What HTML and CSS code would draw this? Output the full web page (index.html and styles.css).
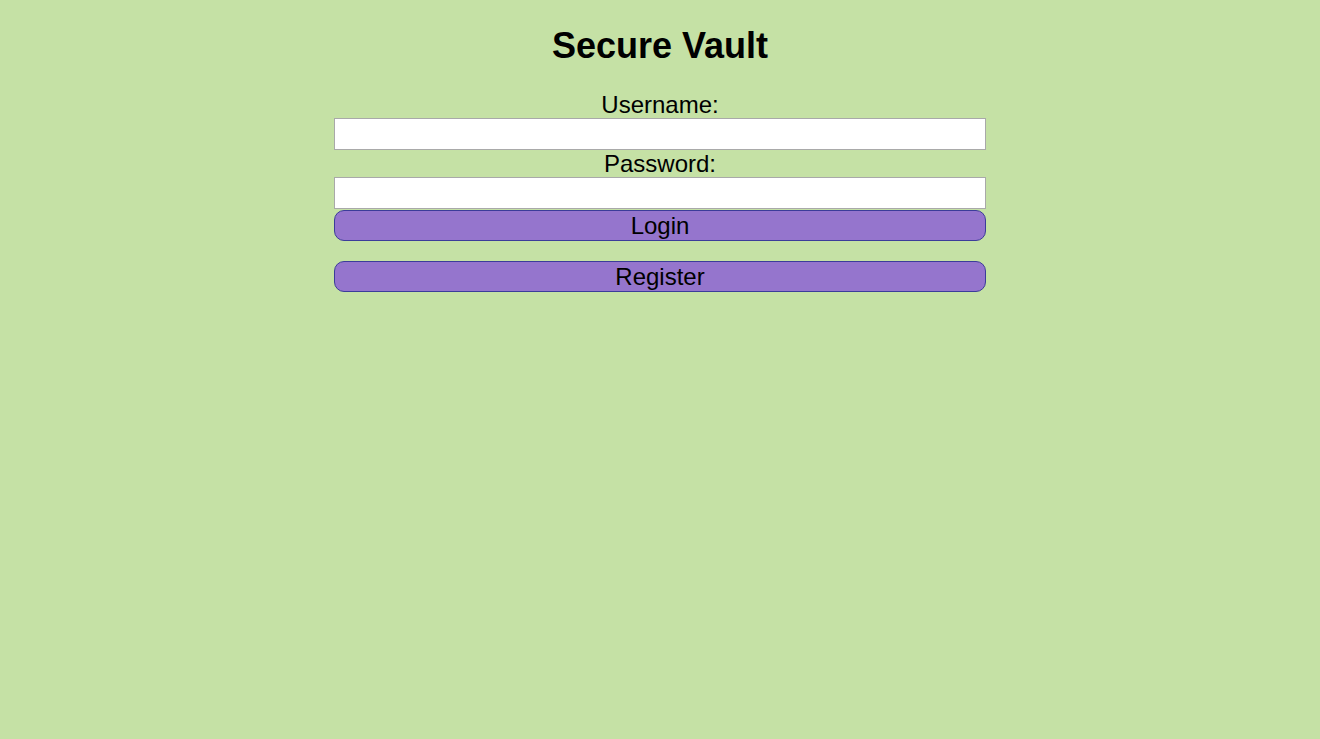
FILE: index.html
```html
<!DOCTYPE html>
<html lang="en">
<head>
<meta charset="utf-8">
<title>Secure Vault</title>
<link rel="stylesheet" href="styles.css">
</head>
<body>
<main class="page">
  <h1 class="title">Secure Vault</h1>
  <form class="form">
    <label class="label" for="username">Username:</label>
    <input class="field" id="username" type="text">
    <label class="label" for="password">Password:</label>
    <input class="field field-last" id="password" type="password">
    <button class="btn btn-login" type="button">Login</button>
    <button class="btn" type="button">Register</button>
  </form>
</main>
</body>
</html>
```

FILE: styles.css
```css
html, body {
  margin: 0;
  padding: 0;
  background: #c5e1a5;
  font-family: "Liberation Sans", Arial, sans-serif;
  color: #000;
}
.page {
  display: flex;
  flex-direction: column;
  align-items: center;
}
.title {
  font-size: 36px;
  font-weight: bold;
  margin: 25px 0;
  line-height: 41px;
}
.form {
  width: 652px;
  display: flex;
  flex-direction: column;
  align-items: stretch;
}
.label {
  font-size: 24px;
  text-align: center;
  line-height: 27px;
}
.field {
  box-sizing: border-box;
  height: 32px;
  margin: 0;
  border: 1px solid #a9a9a9;
  background: #fff;
  font-family: inherit;
  font-size: 16px;
  padding: 0 4px;
}
.field-last {
  margin-bottom: 1px;
}
.btn {
  box-sizing: border-box;
  height: 31px;
  margin: 0;
  padding: 0 6px 1px;
  background: #9575cd;
  border: 1px solid #3c3c9a;
  border-radius: 10px;
  font-family: inherit;
  font-size: 24px;
  line-height: 27px;
  color: #000;
}
.btn-login {
  margin-bottom: 20px;
}
```
